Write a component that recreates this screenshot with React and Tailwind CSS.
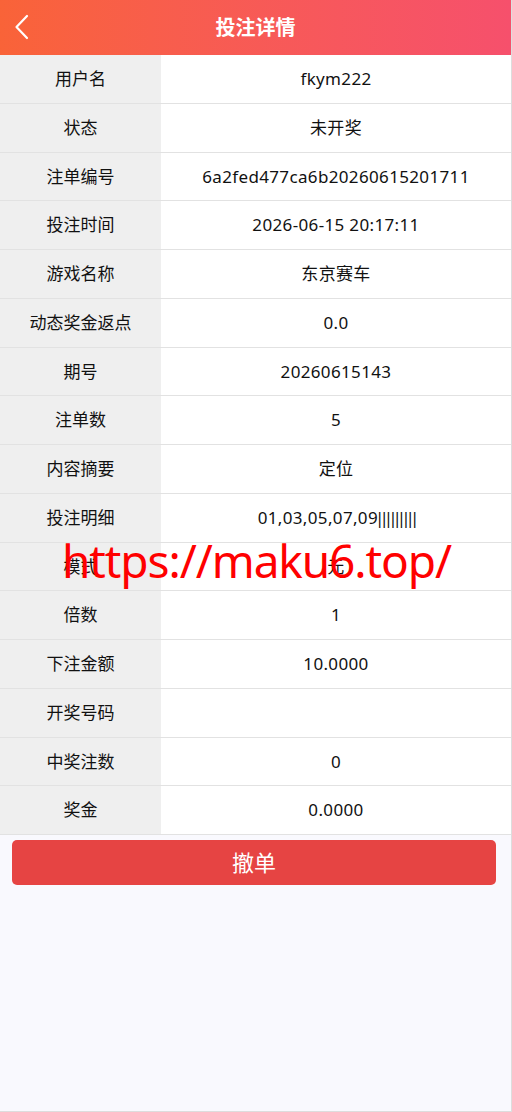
import React from 'react';

const rows = [
  ['用户名', 'fkym222'],
  ['状态', '未开奖'],
  ['注单编号', '6a2fed477ca6b20260615201711'],
  ['投注时间', '2026-06-15 20:17:11'],
  ['游戏名称', '东京赛车'],
  ['动态奖金返点', '0.0'],
  ['期号', '20260615143'],
  ['注单数', '5'],
  ['内容摘要', '定位'],
  ['投注明细', 'pipes'],
  ['模式', '元'],
  ['倍数', '1'],
  ['下注金额', '10.0000'],
  ['开奖号码', ''],
  ['中奖注数', '0'],
  ['奖金', '0.0000'],
];

const App = () => {
  return (
    <div
      className="relative min-h-[1112px] w-[512px] bg-[#f9f9fe] border-r border-b border-[#dddddd] text-[#111]"
      style={{ fontFamily: '"Noto Sans", "Noto Sans CJK SC", sans-serif' }}
    >
      {/* header */}
      <div className="relative h-[55px] flex items-center justify-center bg-gradient-to-r from-[#f96338] to-[#f6506c]">
        <button className="absolute left-[12px] top-[12px] p-[2px]">
          <svg width="16" height="26" viewBox="0 0 16 26" fill="none">
            <path d="M13 2 L2.5 13 L13 24" stroke="white" strokeWidth="2.2" strokeLinecap="round" strokeLinejoin="round" />
          </svg>
        </button>
        <h1 className="text-white text-[20px] font-bold">投注详情</h1>
      </div>

      {/* table */}
      <div className="bg-white">
        {rows.map(([label, value]) => (
          <div key={label} className="flex h-[48.75px] border-b border-[#e2e2e2]">
            <div className="w-[161px] flex items-center justify-center bg-[#efefef] text-[17px]">
              {label}
            </div>
            <div className="flex-1 flex items-center justify-center text-[17px] tracking-[0.35px]">
              {value === 'pipes' ? (
                <span>
                  01,03,05,07,09<span className="ml-[-3px] tracking-[-5px]">|||||||||</span>
                </span>
              ) : (
                value
              )}
            </div>
          </div>
        ))}
      </div>

      {/* cancel */}
      <div className="pl-[12px] pr-[15px] pt-[5px]">
        <button className="w-full h-[45px] rounded-[5px] bg-[#e64443] text-white text-[22px]">
          撤单
        </button>
      </div>

      {/* watermark */}
      <div
        className="absolute left-[62px] top-[537px] text-[#ff0000] text-[46px] leading-none tracking-[-1.1px] pointer-events-none"
        style={{ fontFamily: '"Noto Sans", sans-serif' }}
      >
        https://maku6.top/
      </div>
    </div>
  );
};

export default App;
